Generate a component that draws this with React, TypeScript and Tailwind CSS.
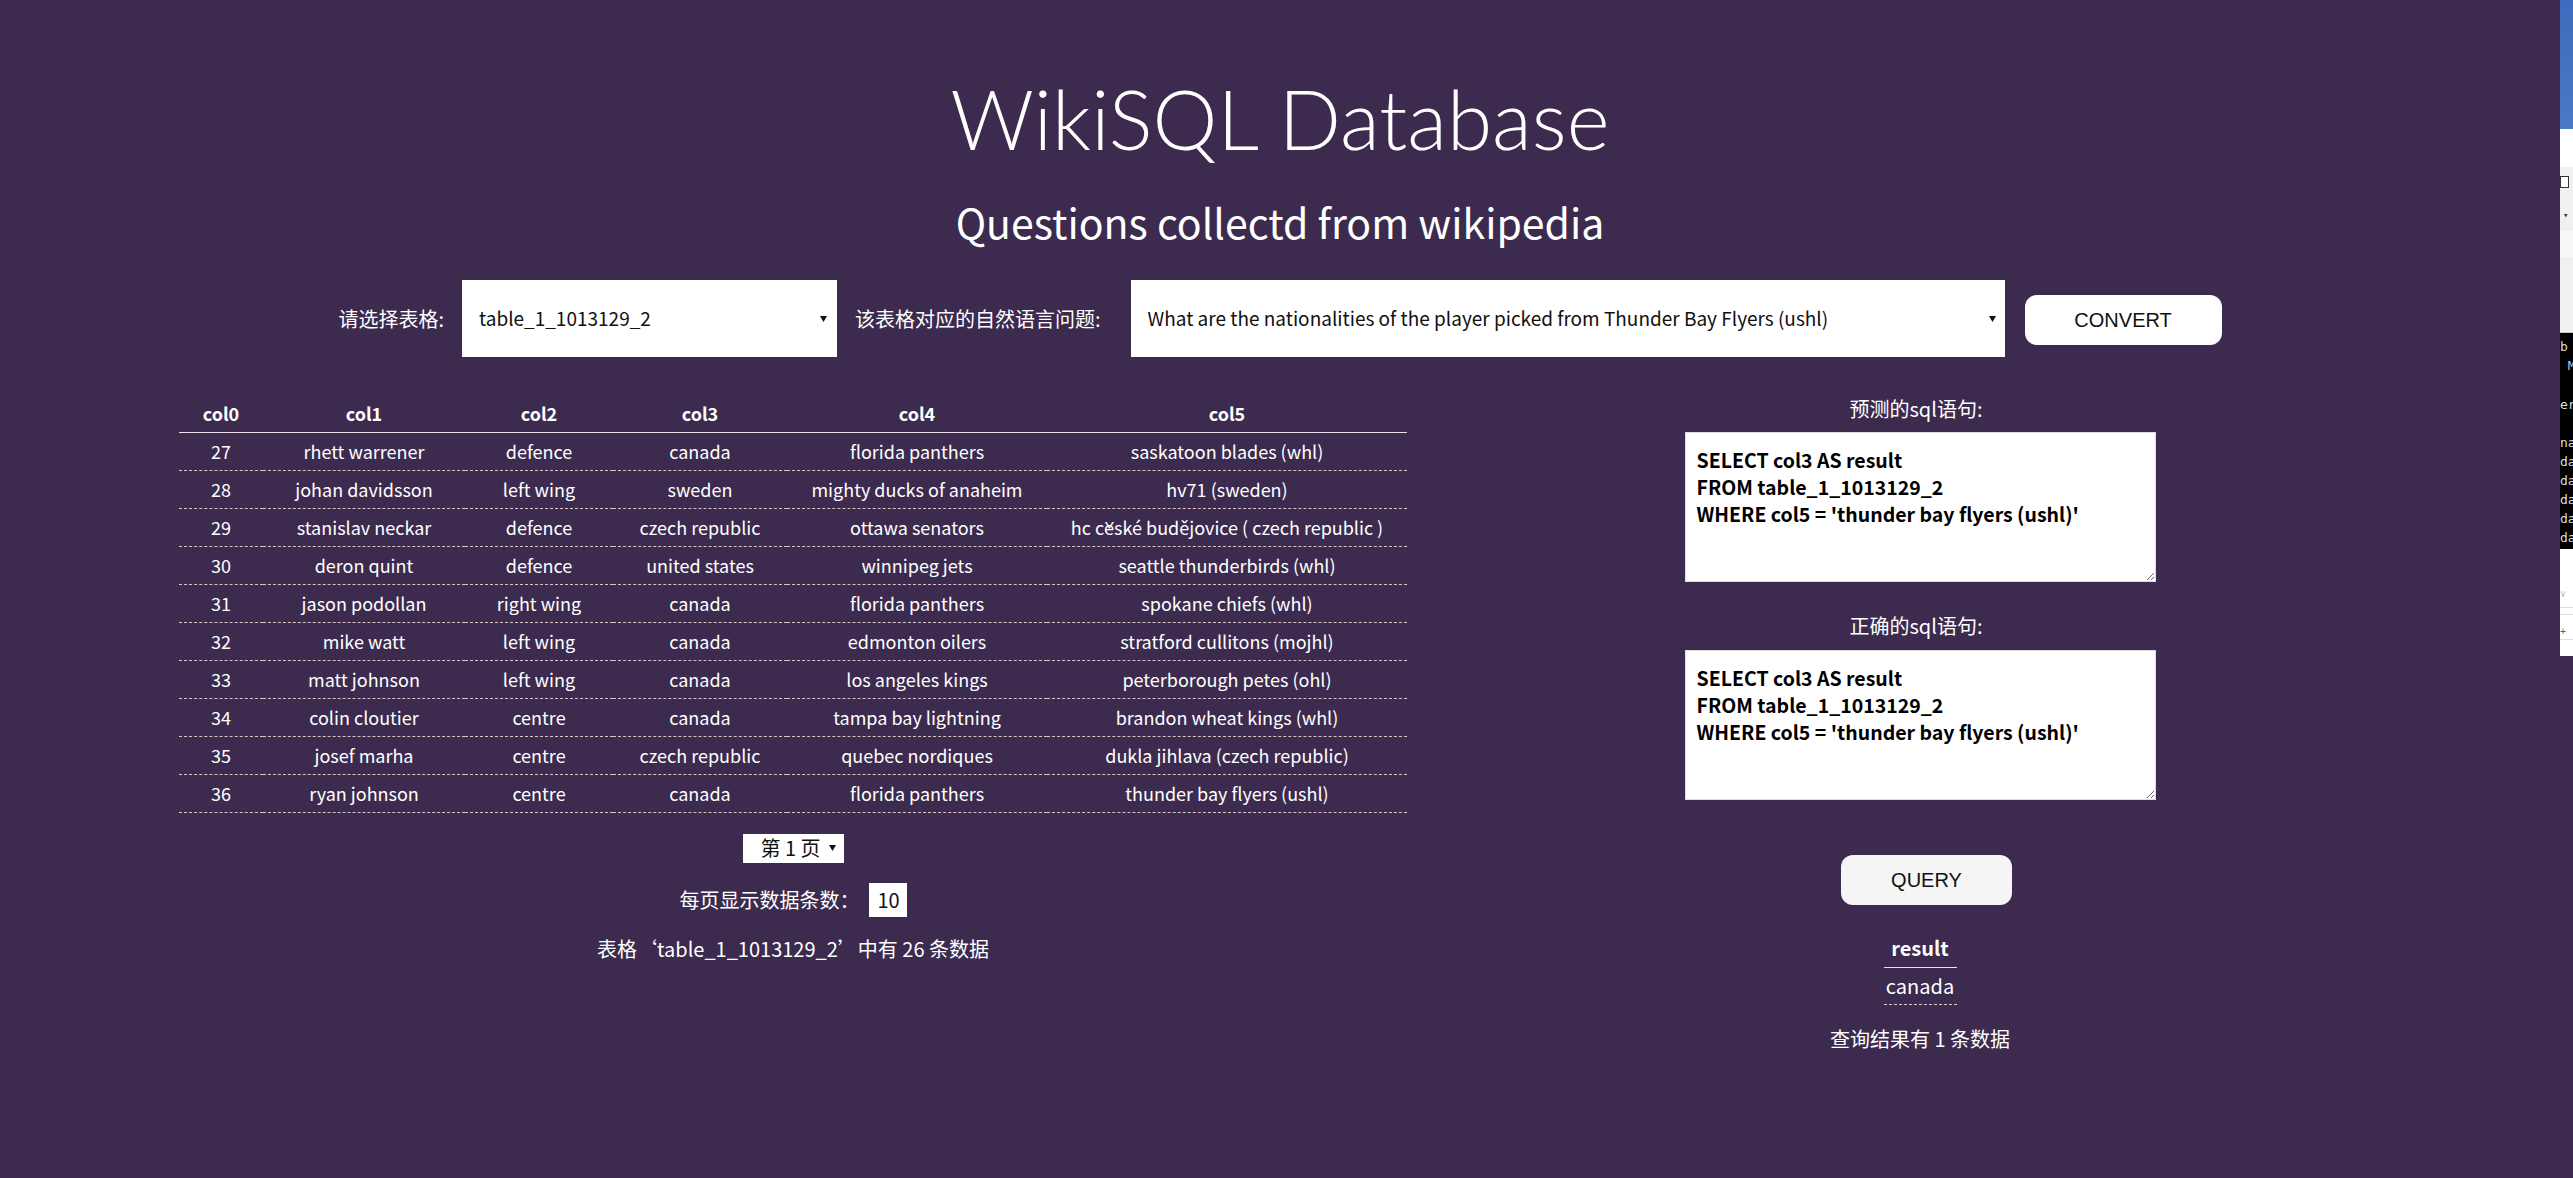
const rows = [
  ['27', 'rhett warrener', 'defence', 'canada', 'florida panthers', 'saskatoon blades (whl)'],
  ['28', 'johan davidsson', 'left wing', 'sweden', 'mighty ducks of anaheim', 'hv71 (sweden)'],
  ['29', 'stanislav neckar', 'defence', 'czech republic', 'ottawa senators', 'hc české budějovice ( czech republic )'],
  ['30', 'deron quint', 'defence', 'united states', 'winnipeg jets', 'seattle thunderbirds (whl)'],
  ['31', 'jason podollan', 'right wing', 'canada', 'florida panthers', 'spokane chiefs (whl)'],
  ['32', 'mike watt', 'left wing', 'canada', 'edmonton oilers', 'stratford cullitons (mojhl)'],
  ['33', 'matt johnson', 'left wing', 'canada', 'los angeles kings', 'peterborough petes (ohl)'],
  ['34', 'colin cloutier', 'centre', 'canada', 'tampa bay lightning', 'brandon wheat kings (whl)'],
  ['35', 'josef marha', 'centre', 'czech republic', 'quebec nordiques', 'dukla jihlava (czech republic)'],
  ['36', 'ryan johnson', 'centre', 'canada', 'florida panthers', 'thunder bay flyers (ushl)'],
]

const colWidths = ['w-[84px]', 'w-[202px]', 'w-[148px]', 'w-[174px]', 'w-[260px]', 'w-[360px]']

const sql = "SELECT col3 AS result\nFROM table_1_1013129_2\nWHERE col5 = 'thunder bay flyers (ushl)'"

const cjk = { fontFamily: '"Noto Sans CJK SC", sans-serif' }
const arial = { fontFamily: '"Liberation Sans", Arial, sans-serif' }

function Caret() {
  return (
    <svg width="7" height="8" viewBox="0 0 7 8" className="shrink-0">
      <polygon points="0,1 7,1 3.5,7" fill="#111" />
    </svg>
  )
}

// The sliver of another window at the right edge of the screenshot
function Strip() {
  return (
    <div className="w-[13px] shrink-0 flex flex-col overflow-hidden text-[13px] leading-[19px]" style={{ fontFamily: '"DejaVu Sans Mono", monospace' }}>
      <div className="h-[129px] bg-gradient-to-b from-[#3d6bbd] to-[#4a79c6]" />
      <div className="h-[38px] bg-white" />
      <div className="h-[166px] bg-[#f0f0f0] border-b border-[#c8c8c8] flex flex-col">
        <div className="mt-[9px] w-[9px] h-[12px] border border-[#333] bg-white" />
        <div className="mt-[22px] ml-[3px] text-[9px] leading-[10px] text-[#333]">▾</div>
        <div className="mt-[11px] h-[26px] bg-[#f7f7f7]" />
      </div>
      <div className="h-[216px] bg-black text-[#ddd] pt-[4px] whitespace-pre">
        <div>b</div>
        <div className="text-[#9cf]"> M</div>
        <div className="mt-[20px]">er</div>
        <div className="mt-[19px]">na</div>
        <div>da</div>
        <div>da</div>
        <div>da</div>
        <div>da</div>
        <div>da</div>
      </div>
      <div className="h-[107px] bg-white flex flex-col">
        <div className="mt-[40px] text-[10px] leading-[10px] text-[#bbb]">∨</div>
        <div className="mt-[8px] h-px bg-[#ddd]" />
        <div className="mt-[6px] h-px bg-[#ddd]" />
        <div className="mt-[12px] text-[10px] leading-[10px] text-[#666]">+</div>
        <div className="mt-[2px] h-px bg-[#ddd]" />
      </div>
    </div>
  )
}

export default function App() {
  return (
    <div className="w-[2573px] h-[1178px] bg-[#3c2b4e] flex text-white overflow-hidden" style={cjk}>
      <div className="w-[2560px] shrink-0 flex flex-col items-center">
        <h1 className="mt-[68px] text-[82px] leading-[100px] font-light" style={{ fontFamily: 'Lato, "Noto Sans CJK SC", sans-serif' }}>
          WikiSQL Database
        </h1>
        <h2 className="mt-[28px] text-[41px] leading-[50px]">Questions collectd from wikipedia</h2>

        {/* table / question pickers */}
        <div className="mt-[34px] flex items-center h-[77px] text-[20px]">
          <span className="mr-[18px]">请选择表格:</span>
          <div className="w-[375px] h-[77px] bg-white text-[#111] text-[19px] flex items-center justify-between pl-[17px] pr-[10px]">
            <span>table_1_1013129_2</span>
            <Caret />
          </div>
          <span className="ml-[18px] mr-[30px]">该表格对应的自然语言问题:</span>
          <div className="w-[874px] h-[77px] bg-white text-[#111] text-[19px] flex items-center justify-between pl-[17px] pr-[9px]">
            <span>What are the nationalities of the player picked from Thunder Bay Flyers (ushl)</span>
            <Caret />
          </div>
          <button className="ml-[20px] w-[197px] h-[50px] mt-[3px] bg-white rounded-[12px] text-[20px] text-[#111]" style={arial}>
            CONVERT
          </button>
        </div>

        <div className="mt-[39px] w-full flex items-start">
          {/* left: table preview */}
          <div className="w-[1586px] flex flex-col items-center text-[20px]">
            <table className="w-[1228px] table-fixed border-collapse text-center text-[18px]">
              <thead>
                <tr className="h-[36px] border-b border-[#e8e2ea]">
                  {['col0', 'col1', 'col2', 'col3', 'col4', 'col5'].map((c, i) => (
                    <th key={c} className={`${colWidths[i]} font-bold p-0`}>{c}</th>
                  ))}
                </tr>
              </thead>
              <tbody>
                {rows.map((r) => (
                  <tr key={r[0]} className="h-[38px]">
                    {r.map((v, i) => (
                      <td key={i} className="p-0 border-b border-dashed border-[#d8c4c2] whitespace-nowrap">{v}</td>
                    ))}
                  </tr>
                ))}
              </tbody>
            </table>

            <div className="mt-[21px] w-[101px] h-[29px] bg-white text-[#111] flex items-center pl-[18px] pr-[8px] justify-between">
              <span>第 1 页</span>
              <Caret />
            </div>

            <div className="mt-[20px] flex items-center h-[34px]">
              <span>每页显示数据条数：</span>
              <div className="ml-[9px] w-[38px] h-[34px] bg-white text-[#111] flex items-center pl-[9px]">10</div>
            </div>

            <div className="mt-[19px] leading-[26px]">表格‘table_1_1013129_2’中有 26 条数据</div>
          </div>

          {/* right: sql + query result */}
          <div className="w-[668px] flex flex-col items-center text-[20px]">
            <div className="leading-[26px] -ml-[8px]">预测的sql语句:</div>
            <textarea
              readOnly
              value={sql}
              className="mt-[10px] w-[471px] h-[150px] bg-white text-black font-bold text-[19.5px] leading-[27px] pt-[13px] pl-[11px] border border-[#ddd] outline-none"
              style={cjk}
            />
            <div className="mt-[31px] leading-[26px] -ml-[8px]">正确的sql语句:</div>
            <textarea
              readOnly
              value={sql}
              className="mt-[11px] w-[471px] h-[150px] bg-white text-black font-bold text-[19.5px] leading-[27px] pt-[13px] pl-[11px] border border-[#ddd] outline-none"
              style={cjk}
            />
            <button className="mt-[55px] ml-[13px] w-[171px] h-[50px] bg-[#f5f5f5] rounded-[12px] text-[20px] text-[#111]" style={arial}>
              QUERY
            </button>

            <table className="mt-[25px] w-[73px] border-collapse text-center">
              <thead>
                <tr className="h-[37px] border-b border-[#e8e2ea]">
                  <th className="p-0 font-bold">result</th>
                </tr>
              </thead>
              <tbody>
                <tr className="h-[37px]">
                  <td className="p-0 border-b border-dashed border-[#d8c4c2]">canada</td>
                </tr>
              </tbody>
            </table>

            <div className="mt-[21px] leading-[26px]">查询结果有 1 条数据</div>
          </div>
        </div>
      </div>
      <Strip />
    </div>
  )
}
